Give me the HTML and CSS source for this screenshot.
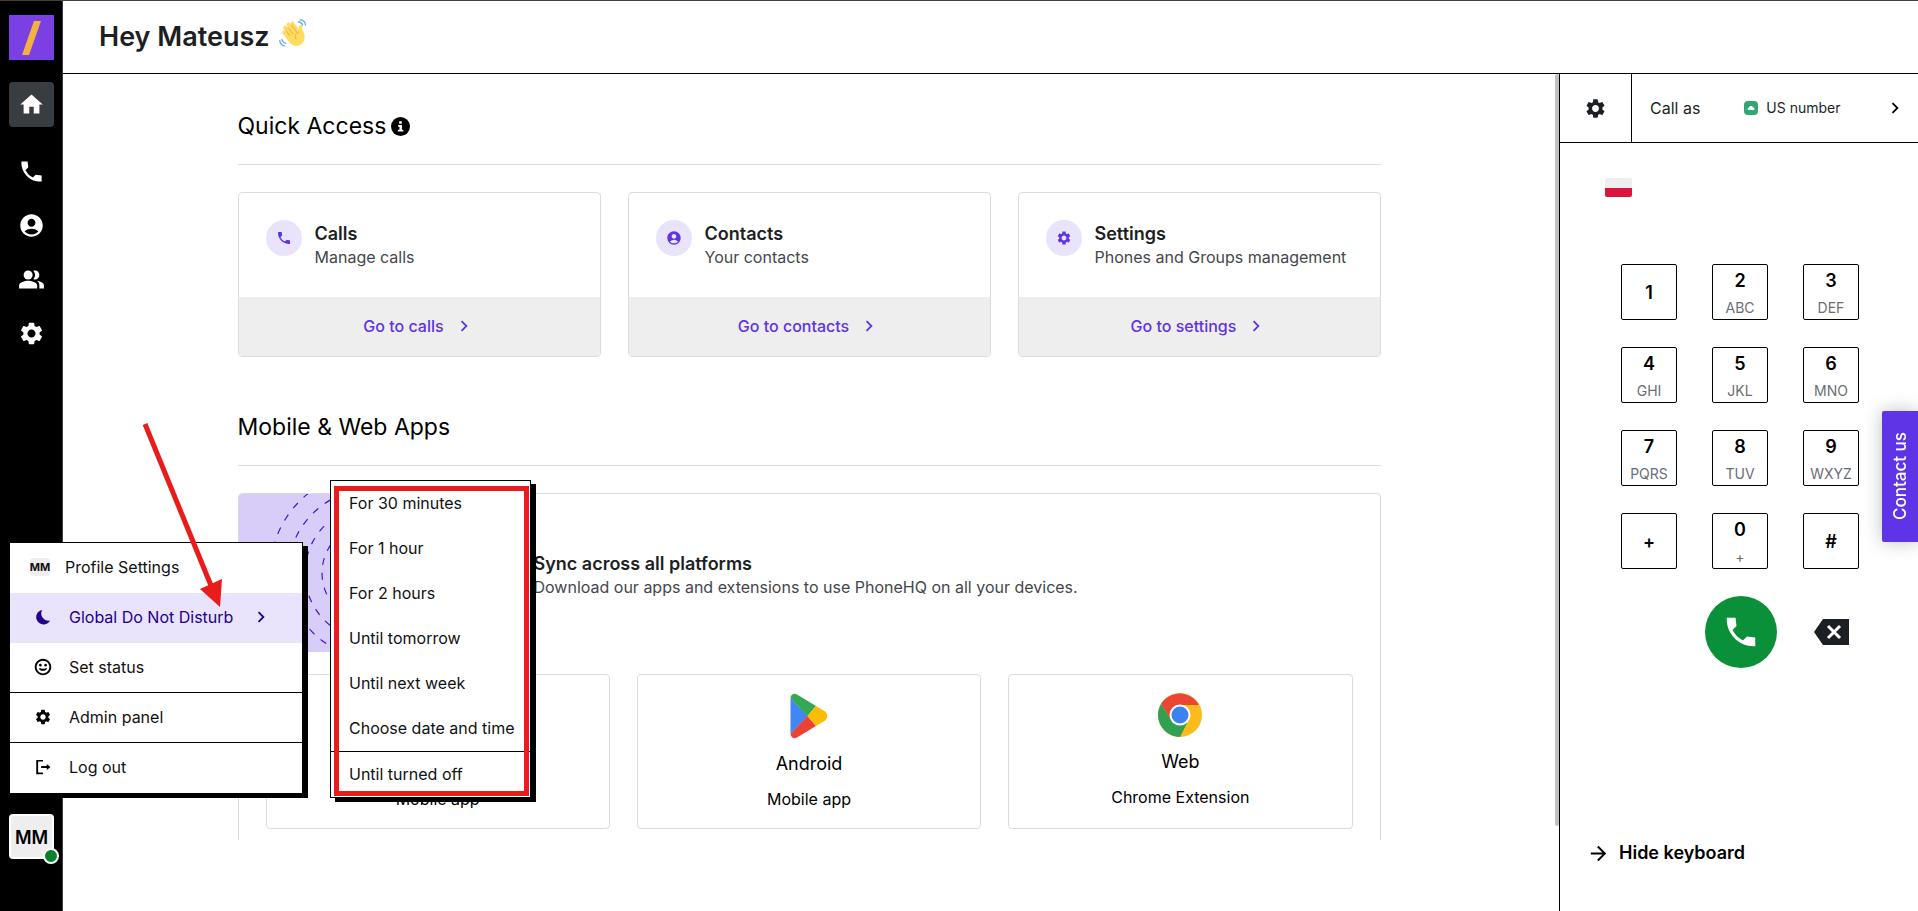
FILE: index.html
```html
<!DOCTYPE html>
<html lang="en">
<head>
    <meta charset="UTF-8">
    <meta name="viewport" content="width=device-width, initial-scale=1.0">
    <title>PhoneHQ</title>
    <link rel="stylesheet" href="styles.css">
</head>
<body>

<!-- Shared icons -->
<svg class="sprite" aria-hidden="true">
    <symbol id="i-home" viewBox="0 0 24 24"><path d="M10 20v-6h4v6h5v-8h3L12 3 2 12h3v8z"/></symbol>
    <symbol id="i-phone" viewBox="0 0 24 24"><path d="M21 15.46l-5.27-.61-2.52 2.52a15.05 15.05 0 0 1-6.59-6.59l2.53-2.53L8.54 3H3.03C2.45 13.18 10.82 21.55 21 20.97z"/></symbol>
    <symbol id="i-contact" viewBox="0 0 24 24"><path d="M12 2C6.48 2 2 6.48 2 12s4.48 10 10 10 10-4.48 10-10S17.52 2 12 2zm0 4c1.93 0 3.5 1.57 3.5 3.5S13.93 13 12 13s-3.5-1.57-3.5-3.5S10.07 6 12 6zm0 14c-2.03 0-4.43-.82-6.14-2.88a9.95 9.95 0 0 1 12.28 0C16.43 19.18 14.03 20 12 20z"/></symbol>
    <symbol id="i-people" viewBox="0 0 24 24"><path d="M16.67 13.13C18.04 14.06 19 15.32 19 17v3h4v-3c0-2.18-3.57-3.47-6.33-3.87z"/><circle cx="9" cy="8" r="4"/><path d="M15 12c2.21 0 4-1.79 4-4s-1.79-4-4-4c-.47 0-.91.1-1.33.24a5.98 5.98 0 0 1 0 7.52c.42.14.86.24 1.33.24zM9 13c-2.67 0-8 1.34-8 4v3h16v-3c0-2.66-5.33-4-8-4z"/></symbol>
    <symbol id="i-gear" viewBox="0 0 24 24"><path d="M19.14 12.94c.04-.3.06-.61.06-.94s-.02-.64-.07-.94l2.03-1.58a.49.49 0 0 0 .12-.61l-1.92-3.32a.488.488 0 0 0-.59-.22l-2.39.96c-.5-.38-1.03-.7-1.62-.94l-.36-2.54a.484.484 0 0 0-.48-.41h-3.84c-.24 0-.43.17-.47.41l-.36 2.54c-.59.24-1.13.57-1.62.94l-2.39-.96c-.22-.08-.47 0-.59.22L2.74 8.87c-.12.21-.08.47.12.61l2.03 1.58c-.05.3-.09.63-.09.94s.02.64.07.94l-2.03 1.58a.49.49 0 0 0-.12.61l1.92 3.32c.12.22.37.29.59.22l2.39-.96c.5.38 1.03.7 1.62.94l.36 2.54c.05.24.24.41.48.41h3.84c.24 0 .44-.17.47-.41l.36-2.54c.59-.24 1.13-.56 1.62-.94l2.39.96c.22.08.47 0 .59-.22l1.92-3.32c.12-.22.07-.47-.12-.61l-2.01-1.58zM12 15.6c-1.98 0-3.6-1.62-3.6-3.6s1.62-3.6 3.6-3.6 3.6 1.62 3.6 3.6-1.62 3.6-3.6 3.6z"/></symbol>
    <symbol id="i-chevron" viewBox="0 0 24 24"><path d="M8.59 16.59L13.17 12 8.59 7.41 10 6l6 6-6 6z"/></symbol>
    <symbol id="i-moon" viewBox="0 0 24 24"><path d="M11 2.5A9.8 9.8 0 1 0 21.5 16.5 9.5 9.5 0 0 1 11 2.5z"/></symbol>
    <symbol id="i-smile" viewBox="0 0 24 24"><path d="M12 1C5.9 1 1 5.9 1 12s4.900 11 11 11 11-4.900 11-11S18.100 1 12 1zm0 19.500c-4.700 0-8.500-3.800-8.500-8.500s3.800-8.500 8.500-8.500 8.500 3.800 8.500 8.500-3.800 8.500-8.500 8.500z"/><circle cx="8.500" cy="9.500" r="1.700"/><circle cx="15.500" cy="9.500" r="1.700"/><path d="M6.500 13.500a5.700 4.800 0 0 0 11 0h-2a5 2 0 0 1-7 0z"/></symbol>
    <symbol id="i-logout" viewBox="0 0 24 24"><path d="M3 2.500h9v2.300H5.500v14.400H12v2.300H3zM17 8l5 4-5 4v-2.800H9.500v-2.400H17z"/></symbol>
    <symbol id="i-arrow" viewBox="0 0 24 24"><path d="M12 4l-1.41 1.41L16.17 11H4v2h12.17l-5.58 5.59L12 20l8-8z"/></symbol>
    <symbol id="i-backspace" viewBox="0 0 36 28"><path d="M9 1h26v26H9L0 14z"/><path d="M14 8l12 12M26 8L14 20" stroke="#fff" stroke-width="3" fill="none"/></symbol>
    <symbol id="i-info" viewBox="0 0 20 20"><circle cx="10" cy="10" r="10"/><path d="M8.6 4.500h2.700V7H8.600zM7.500 8.400h4v5H13v1.800H7.200v-1.800h1.700v-3.200H7.500z" fill="#fff"/></symbol>
</svg>

<nav class="sidebar" aria-label="Main">
    <a class="logo" href="#" aria-label="PhoneHQ">
        <svg viewBox="0 0 45 45"><path d="M25 6h7L20 40h-7z"/></svg>
    </a>
    <a class="nav-link active" href="#" aria-label="Home"><svg><use href="#i-home"/></svg></a>
    <a class="nav-link" href="#" aria-label="Calls"><svg><use href="#i-phone"/></svg></a>
    <a class="nav-link" href="#" aria-label="Contacts"><svg><use href="#i-contact"/></svg></a>
    <a class="nav-link" href="#" aria-label="Groups"><svg><use href="#i-people"/></svg></a>
    <a class="nav-link" href="#" aria-label="Settings"><svg><use href="#i-gear"/></svg></a>
    <button class="avatar" type="button">MM<span class="status-dot"></span></button>
</nav>

<header class="page-header">
    <h1>Hey Mateusz</h1>
    <svg class="wave" viewBox="0 0 28 28" aria-hidden="true">
        <g fill="none" stroke="#ffdc5d" stroke-width="3.600" stroke-linecap="round">
            <path d="M5 13.500l8 9"/>
            <path d="M6 8.500l8 9"/>
            <path d="M9.500 5.500l7 9"/>
            <path d="M13.500 4.500l6 9"/>
            <path d="M21.500 8l.500 9"/>
        </g>
        <path fill="#ffdc5d" d="M8 12l8-4 4.500 5 3.500-1c2 4 2.500 8.500-.500 12-3 3.500-8.500 4-12 .500L7 19z"/>
        <path d="M6.500 11.500l4.500 5M8.500 8l5.500 7M12.500 6l5.500 7.500M20 13c-3 1-4.500 3.500-3 7" fill="none" stroke="#efa23f" stroke-width=".900" stroke-linecap="round"/>
        <path d="M19.500 3c2.200-.100 3.500 1.200 4 3.200M21 .800c3.200 0 5.200 2 5.500 5.200M.800 21.500c.200 3 2 5 5 5.300M3 20.500c.300 2 1.500 3.300 3.700 3.800" fill="none" stroke="#5dadec" stroke-width="1.300" stroke-linecap="round"/>
    </svg>
</header>

<main class="content">
    <div class="container">
        <section>
            <h2 class="section-title">Quick Access <svg class="info"><use href="#i-info"/></svg></h2>
            <div class="cards">
                <article class="card">
                    <div class="card-body">
                        <span class="card-icon"><svg><use href="#i-phone"/></svg></span>
                        <div>
                            <h3>Calls</h3>
                            <p>Manage calls</p>
                        </div>
                    </div>
                    <a class="card-link" href="#">Go to calls <svg><use href="#i-chevron"/></svg></a>
                </article>
                <article class="card">
                    <div class="card-body">
                        <span class="card-icon"><svg><use href="#i-contact"/></svg></span>
                        <div>
                            <h3>Contacts</h3>
                            <p>Your contacts</p>
                        </div>
                    </div>
                    <a class="card-link" href="#">Go to contacts <svg><use href="#i-chevron"/></svg></a>
                </article>
                <article class="card">
                    <div class="card-body">
                        <span class="card-icon"><svg><use href="#i-gear"/></svg></span>
                        <div>
                            <h3>Settings</h3>
                            <p>Phones and Groups management</p>
                        </div>
                    </div>
                    <a class="card-link" href="#">Go to settings <svg><use href="#i-chevron"/></svg></a>
                </article>
            </div>
        </section>

        <section>
            <h2 class="section-title">Mobile &amp; Web Apps</h2>
            <div class="apps">
                <div class="apps-intro">
                    <svg class="apps-art" viewBox="0 0 266 158" aria-hidden="true">
                        <rect width="266" height="158" fill="#d8cdf9"/>
                        <g fill="none" stroke="#4316c4" stroke-width="1.200" stroke-dasharray="7 8">
                            <circle cx="133" cy="79" r="50"/>
                            <circle cx="133" cy="79" r="67"/>
                            <circle cx="133" cy="79" r="84"/>
                            <circle cx="133" cy="79" r="102"/>
                        </g>
                    </svg>
                    <div>
                        <h3>Sync across all platforms</h3>
                        <p>Download our apps and extensions to use PhoneHQ on all your devices.</p>
                    </div>
                </div>
                <div class="app-list">
                    <a class="app" href="#">
                        <svg class="app-logo" viewBox="0 0 46 46"><path d="M23 12c3-1 5-4 5-8-4 1-6 4-5 8zM14 14c4-1 6 1 9 1s6-3 11 1c-6 4-5 12 1 15-2 6-6 11-9 10-3-2-5-1-8 0C11 41 4 20 14 14z"/></svg>
                        <strong>iOS</strong>
                        <span>Mobile app</span>
                    </a>
                    <a class="app" href="#">
                        <svg class="app-logo" viewBox="0 0 46 46">
                            <path fill="#4285f4" d="M4.500 5v36L22 23z"/>
                            <path fill="#34a853" d="M4.500 5C5 1 8.500 0 11 1.500L30 13l-8.500 10z"/>
                            <path fill="#ea4335" d="M4.500 41c.5 4 4 5 6.500 3.500L30 33l-8.500-10z"/>
                            <path fill="#fbbc04" d="M30 13l9 5.500c3 2 3 7 0 9L30 33l-8.500-10z"/>
                        </svg>
                        <strong>Android</strong>
                        <span>Mobile app</span>
                    </a>
                    <a class="app" href="#">
                        <svg class="chrome-logo" viewBox="0 0 44 44">
                            <circle cx="22" cy="22" r="22" fill="#fbbc1b"/>
                            <path fill="#ea4535" d="M3 11a22 22 0 0 1 38 1H22L13.300 27z"/>
                            <path fill="#31a14f" d="M3 11l10.400 16 17.300 0L22 44A22 22 0 0 1 3 11z"/>
                            <circle cx="22" cy="22" r="10.500" fill="#fff"/>
                            <circle cx="22" cy="22" r="8.500" fill="#3b82f0"/>
                        </svg>
                        <strong>Web</strong>
                        <span>Chrome Extension</span>
                    </a>
                </div>
            </div>
        </section>
    </div>
    <div class="scroll-thumb"></div>
</main>

<aside class="dialer" aria-label="Dialer">
    <div class="dialer-top">
        <button class="dialer-settings" type="button" aria-label="Dialer settings"><svg><use href="#i-gear"/></svg></button>
        <button class="call-as" type="button">
            <span class="call-label">Call as</span>
            <svg class="number-badge" viewBox="0 0 14 14"><rect width="14" height="14" rx="4" fill="#31a573"/><path d="M4 9c-1-1.500 0-2.500 1-2.500 0-2 4-2 4 0 1.500 0 2 1.500 1 2.500z" fill="#fff"/></svg>
            <span class="number-name">US number</span>
            <svg class="chevron"><use href="#i-chevron"/></svg>
        </button>
    </div>

    <div class="dialer-body">
        <button class="flag" type="button" aria-label="Poland"></button>
        <div class="keypad">
            <button type="button">1</button>
            <button type="button">2<small>ABC</small></button>
            <button type="button">3<small>DEF</small></button>
            <button type="button">4<small>GHI</small></button>
            <button type="button">5<small>JKL</small></button>
            <button type="button">6<small>MNO</small></button>
            <button type="button">7<small>PQRS</small></button>
            <button type="button">8<small>TUV</small></button>
            <button type="button">9<small>WXYZ</small></button>
            <button type="button">+</button>
            <button type="button">0<small>+</small></button>
            <button type="button">#</button>
        </div>
        <div class="call-row">
            <button class="call-btn" type="button" aria-label="Call"><svg><use href="#i-phone"/></svg></button>
            <button class="erase-btn" type="button" aria-label="Delete"><svg><use href="#i-backspace"/></svg></button>
        </div>
        <button class="hide-keyboard" type="button"><svg><use href="#i-arrow"/></svg>Hide keyboard</button>
    </div>
</aside>

<button class="contact-us" type="button">Contact us</button>

<!-- Profile menu -->
<div class="menu profile-menu">
    <button class="menu-profile" type="button"><span class="mini-avatar">MM</span>Profile Settings</button>
    <button class="selected" type="button"><svg><use href="#i-moon"/></svg>Global Do Not Disturb<svg class="chevron"><use href="#i-chevron"/></svg></button>
    <button class="divided" type="button"><svg><use href="#i-smile"/></svg>Set status</button>
    <button class="divided" type="button"><svg><use href="#i-gear"/></svg>Admin panel</button>
    <button type="button"><svg><use href="#i-logout"/></svg>Log out</button>
</div>

<div class="menu dnd-menu">
    <button type="button">For 30 minutes</button>
    <button type="button">For 1 hour</button>
    <button type="button">For 2 hours</button>
    <button type="button">Until tomorrow</button>
    <button type="button">Until next week</button>
    <button type="button">Choose date and time</button>
    <hr>
    <button type="button">Until turned off</button>
    <div class="highlight"></div>
</div>

<svg class="pointer" viewBox="0 0 90 190" aria-hidden="true">
    <path d="M5 4l67 164" stroke="#e91b1b" stroke-width="5"/>
    <path d="M60 169l22-10-2 28z" fill="#e91b1b"/>
</svg>

</body>
</html>
```

FILE: styles.css
```css
* {
    box-sizing: border-box;
}
body {
    display: grid;
    grid-template-columns: 63px 1fr 359px;
    grid-template-rows: 73px 1fr;
    height: 100vh;
    margin: 0;
    border-top: 1px solid #443f3d;
    overflow: hidden;
    background: #fff;
    color: #000;
    font-family: Inter, "Liberation Sans", sans-serif;
    font-size: 16px;
    line-height: 24px;
}
h1, h2, h3, p {
    margin: 0;
}
button {
    padding: 0;
    border: none;
    background: none;
    color: inherit;
    font: inherit;
    cursor: pointer;
}
a {
    color: inherit;
    text-decoration: none;
}
svg {
    display: block;
    flex: none;
    fill: currentColor;
}
.sprite {
    position: absolute;
    width: 0;
    height: 0;
}

/* Sidebar */
.sidebar {
    grid-row: 1 / 3;
    display: flex;
    flex-direction: column;
    gap: 9px;
    padding: 14px 8px 52px 9px;
    border-right: 1px solid #3a3c42;
    background: #000;
    color: #fff;
}
.logo {
    height: 45px;
    margin-bottom: 13px;
    background: #7b40e4;
    color: #f4b13e;
}
.nav-link {
    display: grid;
    place-items: center;
    height: 45px;
    border-radius: 4px;
}
.nav-link svg {
    width: 27px;
    height: 27px;
}
.nav-link.active {
    margin-bottom: 13px;
    background: #393c41;
}
.avatar {
    position: relative;
    height: 45px;
    margin-top: auto;
    padding-top: 3px;
    border: 2px solid #fff;
    border-radius: 4px;
    background: #eee;
    color: #000;
    font-size: 18px;
    font-weight: 600;
}
.status-dot {
    position: absolute;
    right: -7px;
    bottom: -7px;
    width: 16px;
    height: 16px;
    border: 2px solid #fff;
    border-radius: 50%;
    background: #08812f;
}

/* Header */
.page-header {
    grid-column: 2 / 4;
    display: flex;
    align-items: center;
    gap: 9px;
    padding-left: 36px;
    border-bottom: 1px solid #000;
}
.page-header h1 {
    color: #1c1f23;
    font-size: 27px;
    font-weight: 600;
    line-height: 36px;
}
.wave {
    width: 28px;
    height: 28px;
    margin-bottom: 8px;
}

/* Home content */
.content {
    position: relative;
    min-height: 0;
    margin-bottom: 71px;
    padding: 0 4px 0 0;
    overflow: hidden;
}
.container {
    max-width: 1143px;
    margin: 0 auto;
}
.scroll-thumb {
    position: absolute;
    top: 0;
    right: 0;
    bottom: 14px;
    width: 4px;
    border-radius: 2px;
    background: #bfc1c5;
}
.section-title {
    display: flex;
    align-items: center;
    gap: 5px;
    height: 91px;
    margin-bottom: 27px;
    padding-top: 14px;
    border-bottom: 1px solid #dcdcdc;
    font-size: 23px;
    font-weight: 400;
}
.info {
    width: 19px;
    height: 19px;
}
.cards {
    display: grid;
    grid-template-columns: repeat(3, 1fr);
    gap: 27px;
    margin-bottom: 18px;
}
.card {
    border: 1px solid #dcdcdc;
    border-radius: 4px;
    overflow: hidden;
}
.card-body {
    display: flex;
    gap: 13px;
    height: 104px;
    padding: 27px;
}
.card-icon {
    display: grid;
    place-items: center;
    width: 36px;
    height: 36px;
    border-radius: 50%;
    background: #e9e3fb;
    color: #5f33e6;
}
.card-icon svg {
    width: 16px;
    height: 16px;
}
h3 {
    color: #1c1f23;
    font-size: 18px;
    font-weight: 600;
    line-height: 27px;
}
p {
    color: #43474d;
    line-height: 20px;
}
.card-link {
    display: flex;
    align-items: center;
    justify-content: center;
    gap: 9px;
    height: 59px;
    padding-bottom: 2px;
    background: #eee;
    color: #5f33e6;
    font-weight: 500;
}
.card-link svg {
    width: 22px;
    height: 22px;
}
.apps {
    height: 400px;
    border: 1px solid #dcdcdc;
    border-radius: 4px;
    overflow: hidden;
}
.apps-intro {
    display: flex;
    align-items: center;
    gap: 29px;
    margin-bottom: 22px;
}
.apps-art {
    width: 266px;
    height: 158px;
}
.app-list {
    display: grid;
    grid-template-columns: repeat(3, 1fr);
    gap: 27px;
    padding: 0 27px;
}
.app {
    display: flex;
    flex-direction: column;
    align-items: center;
    height: 155px;
    padding-top: 18px;
    border: 1px solid #dcdcdc;
    border-radius: 4px;
}
.app strong {
    margin: 13px 0 11px;
    font-size: 18px;
    font-weight: 400;
}
.app-logo {
    width: 46px;
    height: 46px;
}
.chrome-logo {
    width: 44px;
    height: 44px;
}

/* Dialer */
.dialer {
    display: flex;
    flex-direction: column;
    border-left: 1px solid #000;
}
.dialer-top {
    display: flex;
    height: 69px;
    border-bottom: 1px solid #000;
}
.dialer-settings {
    display: grid;
    place-items: center;
    width: 72px;
    border-right: 1px solid #000;
    color: #1c1f23;
}
.dialer-settings svg {
    width: 23px;
    height: 23px;
}
.call-as {
    display: flex;
    flex: 1;
    align-items: center;
    padding: 0 12px 1px 18px;
    color: #1c1f23;
}
.number-badge {
    width: 14px;
    height: 14px;
    margin: 0 8px 0 44px;
}
.number-name {
    font-size: 14px;
}
.call-as .chevron {
    width: 22px;
    height: 22px;
    margin-left: auto;
    color: #000;
}
.dialer-body {
    display: flex;
    flex: 1;
    flex-direction: column;
    padding: 35px 59px 46px 61px;
}
.flag {
    width: 27px;
    height: 19px;
    margin: 0 0 67px -16px;
    border-radius: 2px;
    background: linear-gradient(#eee 50%, #dc143c 50%);
}
.keypad {
    display: grid;
    grid-template-columns: repeat(3, 56px);
    justify-content: space-between;
    gap: 27px 0;
}
.keypad button {
    display: flex;
    flex-direction: column;
    align-items: center;
    justify-content: center;
    height: 56px;
    border: 1px solid #000;
    border-radius: 2px;
    font-size: 18px;
    font-weight: 600;
    line-height: 27px;
}
.keypad small {
    margin-bottom: -4px;
    color: #6b6e76;
    font-size: 14px;
    font-weight: 400;
}
.call-row {
    display: flex;
    align-items: center;
    justify-content: flex-end;
    gap: 37px;
    margin-top: 27px;
    padding-right: 9px;
}
.call-btn {
    display: grid;
    place-items: center;
    width: 72px;
    height: 72px;
    border-radius: 50%;
    background: #0a9038;
    color: #fff;
}
.call-btn svg {
    width: 38px;
    height: 38px;
}
.erase-btn {
    color: #1c1f23;
}
.erase-btn svg {
    width: 36px;
    height: 28px;
}
.hide-keyboard {
    display: flex;
    align-items: center;
    gap: 9px;
    margin: auto 0 0 -34px;
    font-size: 18px;
    font-weight: 600;
}
.hide-keyboard svg {
    width: 23px;
    height: 23px;
}
.contact-us {
    position: fixed;
    top: 411px;
    right: 0;
    width: 36px;
    height: 131px;
    border-radius: 0 2px 2px 0;
    background: #5f33e6;
    box-shadow: 0 0 18px rgba(0, 0, 0, 0.25);
    color: #fff;
    font-size: 17px;
    font-weight: 500;
    writing-mode: vertical-rl;
    transform: rotate(180deg);
}

/* Popup menus */
.menu {
    position: absolute;
    border: 1px solid #000;
    background: #fff;
    box-shadow: 5px 4px 0 #000;
}
.menu button {
    display: flex;
    align-items: center;
    width: 100%;
    height: 50px;
    padding-bottom: 2px;
    color: #111;
    text-align: left;
}
.menu .divided {
    border-bottom: 1px solid #000;
}
.menu hr {
    margin: 0;
    border: none;
    border-top: 1px solid #000;
}
.profile-menu {
    top: 542px;
    left: 9px;
    width: 294px;
}
.profile-menu button {
    gap: 17px;
    padding-left: 24px;
}
.profile-menu svg {
    width: 18px;
    height: 18px;
    color: #000;
}
.profile-menu .menu-profile {
    gap: 15px;
    padding-left: 20px;
}
.mini-avatar {
    display: flex;
    justify-content: center;
    width: 20px;
    border-radius: 3px;
    background: #eee;
    font-size: 11px;
    font-weight: 700;
    line-height: 18px;
}
.profile-menu .selected {
    background: #e9e3fb;
    color: #230090;
}
.profile-menu .selected svg {
    color: #230090;
}
.profile-menu .selected .chevron {
    width: 22px;
    height: 22px;
}
.dnd-menu {
    top: 480px;
    left: 330px;
    width: 201px;
}
.dnd-menu button {
    height: 45px;
    padding-left: 18px;
}
.highlight {
    position: absolute;
    top: 5px;
    right: 1px;
    bottom: 1px;
    left: 3px;
    border: 5px solid #e91b1b;
    pointer-events: none;
}
.pointer {
    position: absolute;
    top: 420px;
    left: 140px;
    width: 90px;
    height: 190px;
}
```
